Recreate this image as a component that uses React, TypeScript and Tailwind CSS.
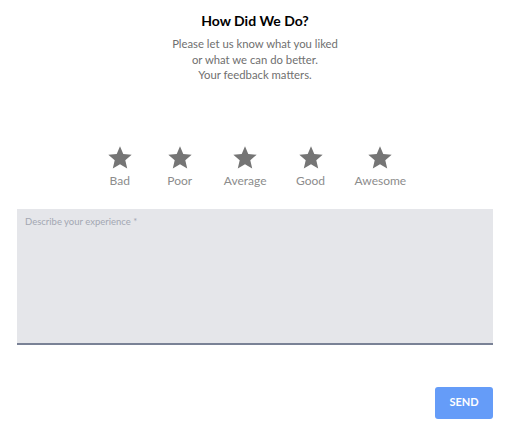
const ratings = ['Bad', 'Poor', 'Average', 'Good', 'Awesome'];

const Star = () => (
    <svg viewBox="0 0 24 24" className="w-[28px] h-[28px]" fill="#757575">
        <path d="M12 17.27L18.18 21l-1.64-7.03L22 9.24l-7.19-.61L12 2 9.19 8.63 2 9.24l5.46 4.73L5.82 21z" />
    </svg>
);

const App = () => {
    return (
        <div className="min-h-[423px] bg-white" style={{ fontFamily: 'Lato, "Open Sans", sans-serif' }}>
            <div className="ml-[17px] w-[476px] pt-[10px] flex flex-col">
                {/* Header */}
                <h1 className="text-center text-[14px] leading-[22px] font-bold text-black">How Did We Do?</h1>
                <p className="mt-[4px] text-center text-[11.3px] leading-[15.5px] text-[#6f6f6f]">
                    Please let us know what you liked
                    <br />
                    or what we can do better.
                    <br />
                    Your feedback matters.
                </p>

                {/* Rating stars */}
                <div className="mt-[61px] flex justify-center gap-[24px]">
                    {ratings.map((r) => (
                        <button key={r} className="min-w-[36px] px-[2px] flex flex-col items-center cursor-pointer">
                            <Star />
                            <span className="mt-[2px] text-[12px] leading-[14px] text-[#8c8c8c]">{r}</span>
                        </button>
                    ))}
                </div>

                {/* Textarea */}
                <div className="mt-[21px] h-[136px] bg-[#e5e6ea] border-b-2 border-[#7a8296] px-[8px] pt-[6px]">
                    <textarea
                        placeholder="Describe your experience *"
                        className="w-full h-full resize-none bg-transparent outline-none text-[9.5px] leading-[13px] placeholder:text-[#a3a7b2]"
                    />
                </div>

                {/* Send */}
                <div className="mt-[42px] flex justify-end">
                    <button className="w-[58px] h-[32px] rounded-[3px] bg-[#659cf8] text-white text-[11px] font-bold">
                        SEND
                    </button>
                </div>
            </div>
        </div>
    );
};

export default App;
